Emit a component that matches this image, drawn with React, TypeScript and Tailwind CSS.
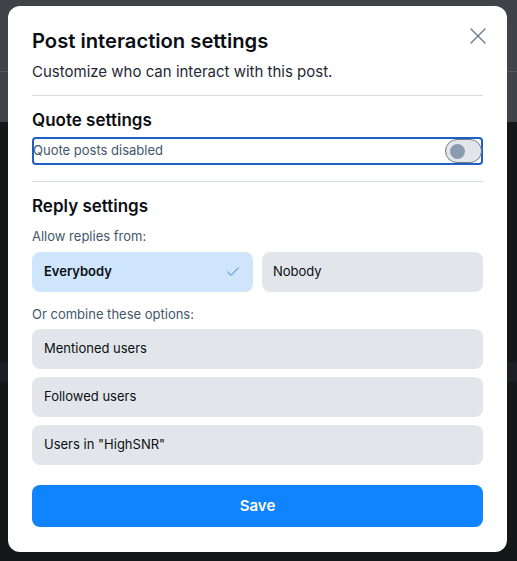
import { X, Check } from "lucide-react"

const options = ["Mentioned users", "Followed users", 'Users in "HighSNR"']

export default function App() {
  return (
    <div className="relative w-[517px] h-[561px] overflow-hidden bg-[#15171b]" style={{ fontFamily: "Inter, 'Noto Sans', sans-serif" }}>
      {/* dimmed page behind */}
      <div className="h-[72px] bg-[#404347] border-b border-[#55585c]" />
      <div className="h-[50px] bg-[#404347]" />
      <div className="h-[240px]" />
      <div className="h-[20px] bg-[#1b1e22]" />

      {/* Modal */}
      <div className="absolute left-[8px] top-[6px] w-[499px] h-[546px] bg-white rounded-xl px-6 pt-[22px] pb-6 text-[#0b0f14]">
        <button className="absolute right-[15px] top-[16px] text-[#6b7a89]">
          <X size={28} strokeWidth={1.2} />
        </button>
        <h1 className="text-[20.2px] font-semibold leading-[26px]">Post interaction settings</h1>
        <p className="mt-[8px] text-[15px] leading-[20px] text-[#1f2933]">Customize who can interact with this post.</p>
        <div className="mt-[13px] border-t border-[#d4dbe2]" />

        <h2 className="mt-[13px] text-[17px] font-semibold leading-[22px]">Quote settings</h2>
        <div className="mt-[6px] h-[28px] flex items-center justify-between border-2 border-[#1e5fc2] rounded-[4px]">
          <span className="text-[13px] text-[#42576c] -ml-[1px]">Quote posts disabled</span>
          <div className="w-[37px] h-[24px] rounded-full bg-[#e2e6ea] border border-[#6f7d8c] flex items-center pl-[4px] -mr-[1px]">
            <div className="w-[15px] h-[15px] rounded-full bg-[#8a9bb0]" />
          </div>
        </div>
        <div className="mt-[16px] border-t border-[#d4dbe2]" />

        <h2 className="mt-[13px] text-[17px] font-semibold leading-[22px]">Reply settings</h2>
        <p className="mt-[10px] text-[13px] leading-[18px] text-[#42576c]">Allow replies from:</p>
        <div className="mt-[7px] grid grid-cols-2 gap-[9px]">
          <button className="h-[40px] rounded-lg bg-[#cfe5fc] flex items-center justify-between pl-3 pr-[12px] text-[13px] font-semibold text-[#0b0f14]">
            Everybody
            <Check size={16} strokeWidth={1.5} className="text-[#2f7de1]" />
          </button>
          <button className="h-[40px] rounded-lg bg-[#e2e6ea] flex items-center pl-[11px] text-[13px] text-[#0b0f14]">Nobody</button>
        </div>

        <p className="mt-[13px] text-[13px] leading-[18px] text-[#42576c]">Or combine these options:</p>
        <div className="mt-[6px] flex flex-col gap-[8px]">
          {options.map((o) => (
            <button key={o} className="h-[40px] rounded-lg bg-[#e2e6ea] flex items-center pl-3 text-[13px] text-[#0b0f14]">
              {o}
            </button>
          ))}
        </div>

        <button className="mt-[20px] w-full h-[42px] rounded-lg bg-[#1083fe] text-white text-[15px] font-semibold">
          Save
        </button>
      </div>
    </div>
  )
}
